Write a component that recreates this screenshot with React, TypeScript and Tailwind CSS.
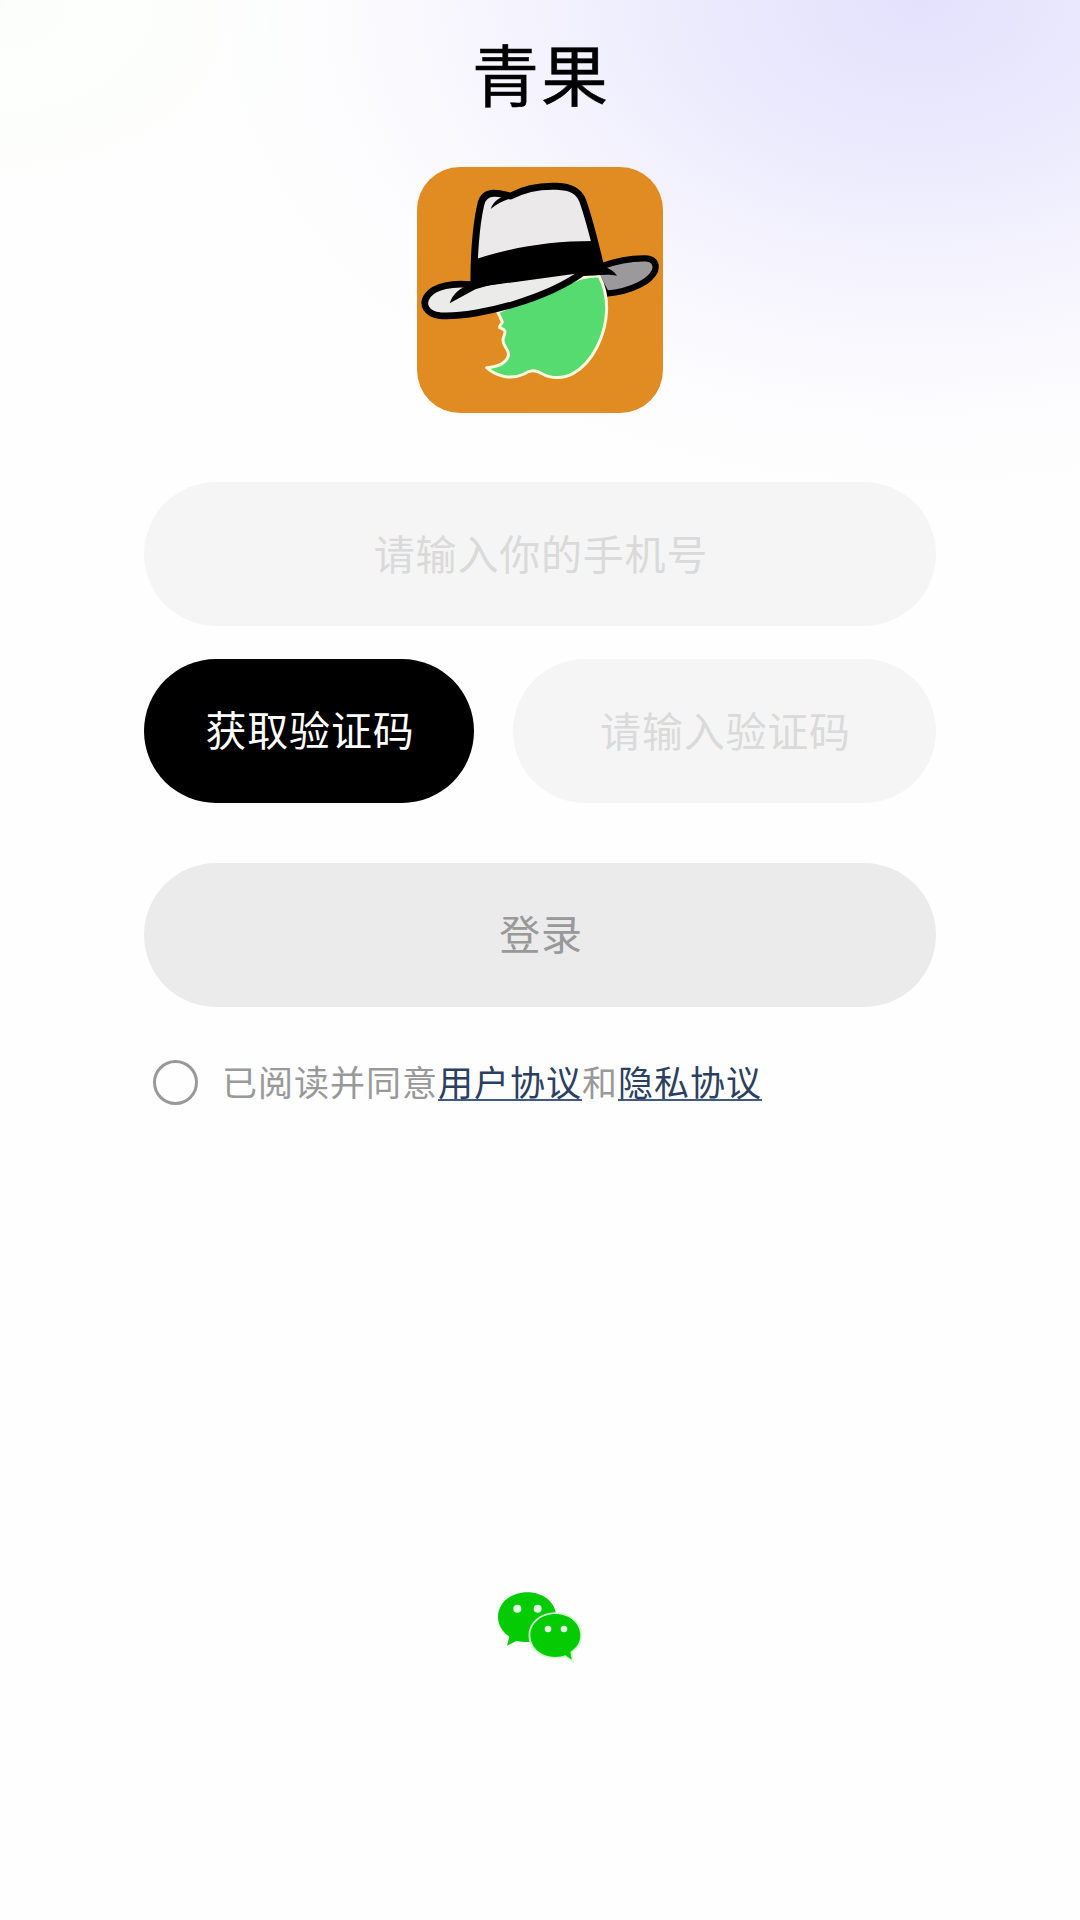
import { useState } from "react";

const FIELD =
    "h-[144px] rounded-full bg-[#f5f5f5] pb-1 pl-0.5 text-center text-[41px] tracking-[0.8px] text-[#333] outline-none placeholder:text-[#dadada] placeholder:opacity-100";

function AppLogo() {
    return (
        <svg className="h-[246px] w-[246px] rounded-[43px] bg-[#e08c23]" viewBox="51 51 738 738" fill="none">
            {/* Right side of the brim */}
            <path
                d="M605 349C650 332 695 324 738 325C762 326 771 342 765 362C752 392 700 424 618 431L590 375Z"
                fill="#9b999b"
                stroke="#000"
                strokeWidth="19"
                strokeLinejoin="round"
            />
            {/* Face */}
            <path
                d="M293 486L540 385C560 379 580 377 597 377C612 405 620 440 620 477C618 560 575 640 520 670C490 686 455 687 428 672C405 659 390 659 372 672C335 690 290 680 260 653C295 650 318 640 325 618C330 596 307 592 309 568C312 555 320 545 312 539L299 533C297 527 306 522 307 516C302 505 300 498 293 486Z"
                fill="#55db70"
                stroke="#fdfbdc"
                strokeWidth="9"
                strokeLinejoin="round"
            />
            {/* Left side of the brim */}
            <path
                d="M210 404C160 398 105 408 84 435C62 463 80 493 120 497C180 501 270 484 340 463C430 436 500 403 550 366L540 355Z"
                fill="#ebebea"
                stroke="#000"
                strokeWidth="20"
                strokeLinejoin="round"
            />
            {/* Crown */}
            <path
                d="M222 402C221 330 227 230 242 165C247 140 262 129 285 130C303 130 318 136 332 138C370 118 420 107 470 109C515 111 537 124 548 152C570 214 588 290 602 350Z"
                fill="#ebe9ea"
                stroke="#000"
                strokeWidth="21"
                strokeLinejoin="round"
            />
            <path d="M272 177C280 152 305 135 345 130L352 139C320 148 296 158 272 177Z" fill="#000" />
            {/* Ribbon */}
            <path
                d="M228 327C330 293 450 273 578 273L608 345C630 358 643 364 651 377C620 370 580 378 545 378L542 362C450 366 340 382 226 418L149 460C158 432 180 412 212 405Z"
                fill="#000"
            />
        </svg>
    );
}

function WechatIcon() {
    const front =
        "M226 132C184 132 151 160 151 196C151 233 184 261 226 261C237 261 247 259 256 256L275 269L271 246C290 234 301 217 301 196C301 160 268 132 226 132Z";

    return (
        <svg className="h-[110px] w-[120px]" viewBox="0 0 360 330">
            <path
                d="M142 67C92 67 54 99 54 141C54 165 67 186 88 200L81 227L110 212C120 215 131 216 142 216C191 216 229 183 229 141C229 99 191 67 142 67Z"
                fill="#04cb04"
            />
            <path d={front} fill="none" stroke="#d3f9d3" strokeWidth="11" />
            <path d={front} fill="#04cb04" />
            <g fill="#e2fbe2">
                <circle cx="112" cy="116" r="12" />
                <circle cx="173" cy="116" r="12" />
                <circle cx="204" cy="177" r="10" />
                <circle cx="252" cy="177" r="10" />
            </g>
        </svg>
    );
}

export default function App() {
    const [agreed, setAgreed] = useState(false);

    return (
        <div className="flex h-[1920px] w-[1080px] flex-col items-center bg-[#fefefe] bg-[radial-gradient(ellipse_360px_260px_at_0px_0px,#fbfffa,transparent),radial-gradient(ellipse_720px_500px_at_920px_0px,#e4e1fd_0%,#ecebfd_33%,#f7f6fe_62%,#fcfcfe_82%,#fefefe_100%)] bg-no-repeat font-['Noto_Sans_CJK_SC',sans-serif]">
            <h1 className="mt-[24px] h-[99px] pl-0.5 text-[67px] leading-[96px] tracking-[2px] text-black [-webkit-text-stroke:0.5px_#000]">
                青果
            </h1>

            <div className="mt-[44px]">
                <AppLogo />
            </div>

            <form className="mt-[69px] flex w-[792px] flex-col" onSubmit={(e) => e.preventDefault()}>
                <input className={FIELD} type="tel" placeholder="请输入你的手机号" />

                <div className="mt-[33px] flex gap-[39px]">
                    <button
                        type="button"
                        className="h-[144px] w-[330px] rounded-full bg-black pb-1 pl-0.5 text-[41px] tracking-[0.8px] text-white"
                    >
                        获取验证码
                    </button>
                    <input className={`${FIELD} w-[423px]`} type="text" placeholder="请输入验证码" />
                </div>

                <button
                    type="submit"
                    className="mt-[60px] h-[144px] rounded-full bg-[#ebebeb] pb-1 pl-0.5 text-[41px] tracking-[0.8px] text-[#999]"
                >
                    登录
                </button>

                <div className="mt-[51px] flex h-12 items-center pl-[9px]">
                    <button
                        type="button"
                        aria-label="同意协议"
                        onClick={() => setAgreed(!agreed)}
                        className={`h-[45px] w-[45px] rounded-full border-[3px] border-[#999] ${agreed ? "bg-[#999]" : ""}`}
                    />
                    <p className="ml-6 flex pb-[3px] text-[35px] leading-12 tracking-[1px] text-[#999]">
                        已阅读并同意
                        <a className="h-[44px] border-b-2 border-[#405a82] text-[#2b3f60]">用户协议</a>
                        和
                        <a className="h-[44px] border-b-2 border-[#405a82] text-[#2b3f60]">隐私协议</a>
                    </p>
                </div>
            </form>

            <div className="mt-[464px]">
                <WechatIcon />
            </div>
        </div>
    );
}
